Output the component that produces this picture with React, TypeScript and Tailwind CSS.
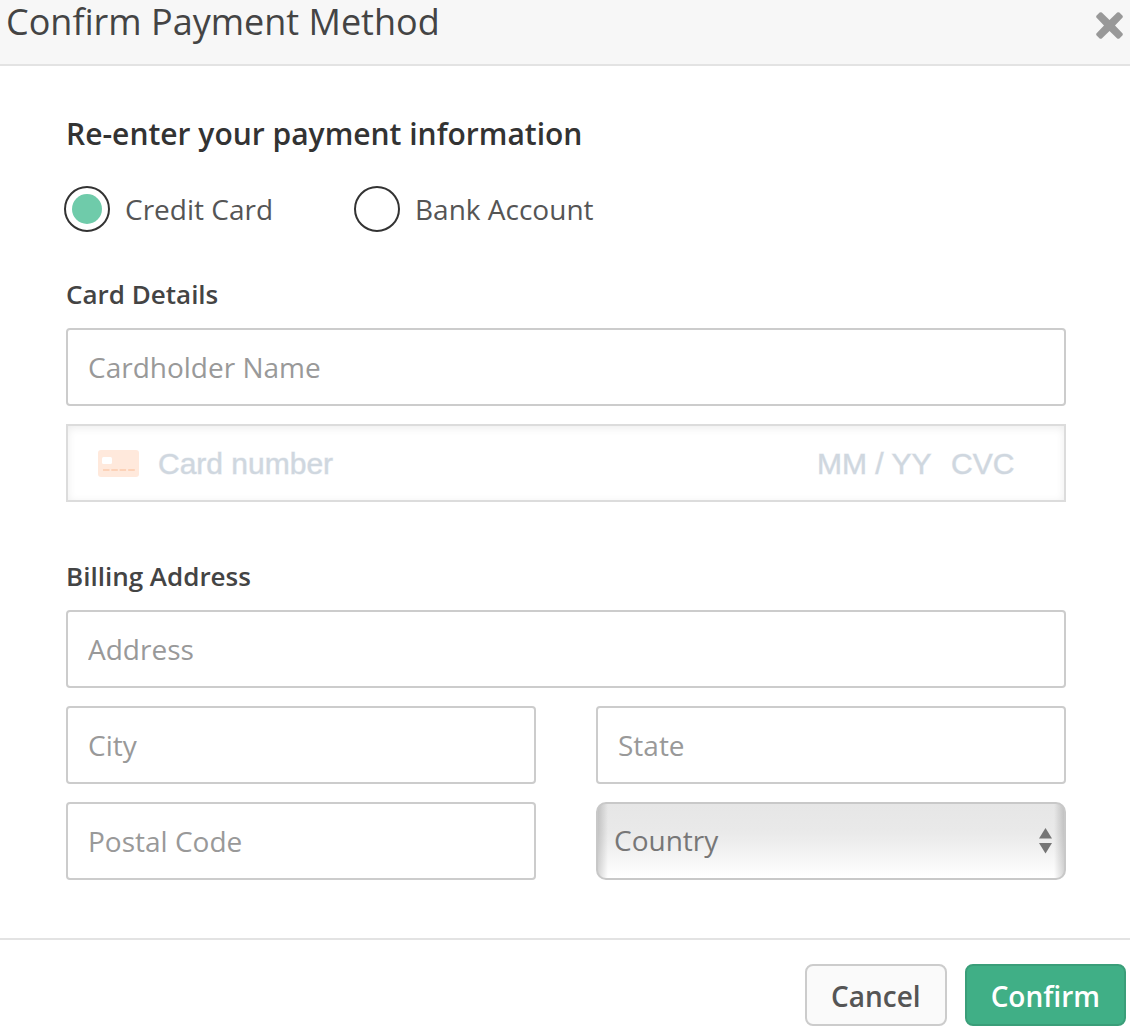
import { useState } from 'react';
import type { InputHTMLAttributes } from 'react';

type Method = 'card' | 'bank';

const METHODS: { id: Method; label: string }[] = [
  { id: 'card', label: 'Credit Card' },
  { id: 'bank', label: 'Bank Account' },
];

function TextField({ label, ...rest }: { label: string } & InputHTMLAttributes<HTMLInputElement>) {
  return (
    <input
      type="text"
      aria-label={label}
      placeholder={label}
      className="block h-[78px] w-full min-w-0 rounded-[4px] border-2 border-[#cccccc] bg-white px-5 text-[28px] text-[#555555] outline-none placeholder:text-[#999999] focus:border-[#999999]"
      {...rest}
    />
  );
}

function CardIcon() {
  return (
    <svg width="41" height="27" viewBox="0 0 41 27" className="shrink-0" aria-hidden="true">
      <rect width="41" height="27" rx="3" fill="#ffe9dc" />
      <rect x="4" y="7" width="10" height="7" rx="1.5" fill="#ffffff" />
      <path d="M5 20H11.5M13.3 20H19.8M21.6 20H28.1M30.2 20H36.8" stroke="#fcd2b8" strokeWidth="2" />
    </svg>
  );
}

function CardNumberField() {
  const input = 'h-full min-w-0 bg-transparent pt-[2px] outline-none placeholder:text-[#cfd7df]';
  return (
    <div className="flex h-[78px] items-center border-2 border-[#dcdcdc] bg-white pl-[30px] pr-[39px] font-['Liberation_Sans',Arial,sans-serif] text-[30px] text-[#32325d] shadow-[inset_0_2px_8px_rgba(0,0,0,0.08)] [-webkit-text-stroke:1px_rgba(207,215,223,0.5)]">
      <CardIcon />
      <input aria-label="Card number" placeholder="Card number" className={`${input} ml-[19px] flex-1`} />
      <input aria-label="Expiry date" placeholder="MM / YY" className={`${input} w-[134px]`} />
      <input aria-label="CVC" placeholder="CVC" className={`${input} w-[74px]`} />
    </div>
  );
}

function CountrySelect() {
  return (
    <div className="relative">
      <select
        aria-label="Country"
        defaultValue=""
        className="block h-[78px] w-full appearance-none rounded-[10px] border-2 border-[#c8c8c8] bg-[linear-gradient(to_right,rgba(0,0,0,0.16),transparent_10px,transparent_calc(100%-10px),rgba(0,0,0,0.16)),linear-gradient(#e6e6e6,#e9e9e9_35%,#ededed_50%,#ffffff)] px-4 pb-[2px] text-[28px] text-[#777777] outline-none"
      >
        <option value="">Country</option>
        <option value="CA">Canada</option>
        <option value="US">United States</option>
      </select>
      <svg
        width="13"
        height="26"
        viewBox="0 0 13 26"
        fill="#757575"
        className="pointer-events-none absolute right-[14px] top-[26px]"
        aria-hidden="true"
      >
        <path d="M6.5 0L13 10.5H0Z" />
        <path d="M6.5 25.5L13 15H0Z" />
      </svg>
    </div>
  );
}

export default function App() {
  const [method, setMethod] = useState<Method>('card');

  return (
    <div className="min-h-screen bg-white font-['Open_Sans','Noto_Sans',sans-serif] text-[#444444]">
      <header className="flex h-[66px] items-start justify-between border-b-2 border-[#e3e3e3] bg-[#f7f7f7] pl-[6px] pr-[7px]">
        <h1 className="text-[36px] leading-[44px]">Confirm Payment Method</h1>
        <button type="button" aria-label="Close" className="mt-3">
          <svg width="27" height="27" viewBox="0 0 27 27" aria-hidden="true">
            <path
              d="M5.8 .6L13.5 8L21.2 .6Q22.3 -.3 23.4 .6L26.4 3.6Q27.3 4.7 26.4 5.8L19 13.5L26.4 21.2Q27.3 22.3 26.4 23.4L23.4 26.4Q22.3 27.3 21.2 26.4L13.5 19L5.8 26.4Q4.7 27.3 3.6 26.4L.6 23.4Q-.3 22.3 .6 21.2L8 13.5L.6 5.8Q-.3 4.7 .6 3.6L3.6 .6Q4.7 -.3 5.8 .6Z"
              fill="#999999"
            />
          </svg>
        </button>
      </header>

      <form>
        <div className="px-16 pb-[58px] pt-[46px]">
          <h2 className="pl-[2px] text-[30px] font-semibold leading-[44px] text-[#333333]">
            Re-enter your payment information
          </h2>

          <div className="mt-[30px] flex gap-[81px]" role="radiogroup" aria-label="Payment method">
            {METHODS.map(({ id, label }) => (
              <label key={id} className="flex items-center gap-[15px] text-[28px] leading-[46px] text-[#555555]">
                <input
                  type="radio"
                  name="method"
                  checked={method === id}
                  onChange={() => setMethod(id)}
                  className="size-[46px] appearance-none rounded-full border-2 border-[#333333] bg-white bg-clip-content p-[6px] checked:bg-[#6fcbaa]"
                />
                {label}
              </label>
            ))}
          </div>

          <section className="mt-[42px] pl-[2px]">
            <h3 className="text-[26px] font-semibold leading-10">Card Details</h3>
            <div className="mt-[14px] grid gap-[18px]">
              <TextField label="Cardholder Name" />
              <CardNumberField />
            </div>
          </section>

          <section className="mt-[54px] pl-[2px]">
            <h3 className="text-[26px] font-semibold leading-10">Billing Address</h3>
            <div className="mt-[14px] grid grid-cols-2 gap-x-[60px] gap-y-[18px]">
              <div className="col-span-2">
                <TextField label="Address" />
              </div>
              <TextField label="City" />
              <TextField label="State" />
              <TextField label="Postal Code" />
              <CountrySelect />
            </div>
          </section>
        </div>

        <footer className="flex justify-end gap-[18px] border-t-2 border-[#e3e3e3] pb-1 pr-1 pt-6 text-[28px] font-semibold">
          <button
            type="button"
            className="h-[62px] rounded-[8px] border-2 border-[#cccccc] bg-[#fafafa] px-6 pt-[2px] text-[#555555]"
          >
            Cancel
          </button>
          <button
            type="button"
            className="h-[62px] rounded-[8px] border-2 border-[#3a9e79] bg-[#40af86] px-6 pt-[2px] text-white"
          >
            Confirm
          </button>
        </footer>
      </form>
    </div>
  );
}
